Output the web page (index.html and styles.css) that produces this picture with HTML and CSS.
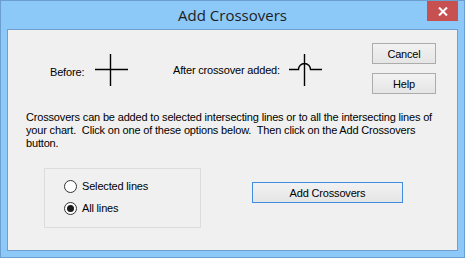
FILE: index.html
```html
<!DOCTYPE html>
<html lang="en">
<head>
  <meta charset="UTF-8" />
  <title>Add Crossovers</title>
  <link rel="stylesheet" href="styles.css">
</head>
<body>
  <div class="window">
    <div class="titlebar">
      <span></span>
      <span class="title">Add Crossovers</span>
      <button class="close" aria-label="Close">
        <svg width="10" height="9" viewBox="0 0 10 9">
          <path d="M1 0.5L9 8.5M9 0.5L1 8.5" stroke="#fff" stroke-width="2" />
        </svg>
      </button>
    </div>

    <div class="client">
      <div class="top">
        <div class="samples">
          <span class="before-label">Before:</span>
          <svg class="glyph" width="33" height="32" viewBox="0 0 33 32">
            <path d="M0 15.5H33M15.5 0V32" stroke="#000" stroke-width="1.4" fill="none" />
          </svg>
          <span class="after-label">After crossover added:</span>
          <svg class="glyph" width="33" height="32" viewBox="0 0 33 32">
            <path d="M0 15.5H9.5A6 6 0 0 1 21.5 15.5H33M15.5 0V32" stroke="#000" stroke-width="1.4" fill="none" />
          </svg>
        </div>
        <div class="side-buttons">
          <button class="btn">Cancel</button>
          <button class="btn">Help</button>
        </div>
      </div>

      <p class="info">Crossovers can be added to selected intersecting lines or to all the intersecting lines of
your chart.  Click on one of these options below.  Then click on the Add Crossovers
button.</p>

      <div class="bottom">
        <div class="group">
          <label class="option"><span class="radio"></span>Selected lines</label>
          <label class="option"><span class="radio checked"></span>All lines</label>
        </div>
        <button class="btn btn-default">Add Crossovers</button>
      </div>
    </div>
  </div>
</body>
</html>
```

FILE: styles.css
```css
body {
  margin: 0;
  font-family: "Liberation Sans", Arial, sans-serif;
  font-size: 11px;
  letter-spacing: -0.17px;
  color: #000;
}

.window {
  width: 465px;
  height: 258px;
  box-sizing: border-box;
  border: 1px solid #6b9fcf;
  background: #8cc8f8;
  padding: 0 6px 6px;
  display: flex;
  flex-direction: column;
}

.titlebar {
  height: 28px;
  margin: 0 -6px;
  display: grid;
  grid-template-columns: 1fr auto 1fr;
  align-items: start;
}

.title {
  font-family: "Open Sans", "Noto Sans", sans-serif;
  font-size: 15px;
  letter-spacing: 0;
  line-height: 29px;
  color: #1e1e1e;
}

.close {
  justify-self: end;
  width: 31px;
  height: 20px;
  margin-right: 6px;
  padding: 0;
  border: none;
  background: #c75050;
  display: flex;
  align-items: center;
  justify-content: center;
}

.client {
  flex: 1;
  background: #f0f0f0;
  border: 1px solid #6f9fcf;
}

.top {
  display: flex;
  align-items: flex-start;
  padding-top: 13px;
}

.samples {
  display: flex;
  align-items: center;
  height: 32px;
  margin-top: 11px;
  margin-left: 42px;
}

.before-label {
  width: 45px;
  padding-top: 3px;
}

.after-label {
  width: 116px;
  margin-left: 45px;
}

.glyph {
  display: block;
}

.side-buttons {
  margin-left: auto;
  margin-right: 21px;
  display: flex;
  flex-direction: column;
  gap: 9px;
}

.btn {
  height: 21px;
  padding: 0;
  border: 1px solid #acacac;
  background: linear-gradient(#f2f2f2, #e5e5e5);
  font-family: "Liberation Sans", Arial, sans-serif;
  font-size: 11px;
  letter-spacing: -0.17px;
  color: #000;
}

.side-buttons .btn {
  width: 64px;
}

.btn-default {
  width: 151px;
  margin-top: 14px;
  margin-left: 51px;
  border-color: #3d8ee2;
}

.info {
  margin: 17px 0 0 18px;
  line-height: 13px;
  white-space: pre;
}

.bottom {
  display: flex;
  align-items: flex-start;
  margin-top: 18px;
}

.group {
  width: 157px;
  height: 60px;
  box-sizing: border-box;
  margin-left: 36px;
  padding: 9px 0 0 19px;
  border: 1px solid #dcdcdc;
  display: flex;
  flex-direction: column;
  gap: 6px;
}

.option {
  display: flex;
  align-items: center;
  gap: 5px;
  height: 16px;
}

.radio {
  width: 13px;
  height: 13px;
  box-sizing: border-box;
  border: 1px solid #333;
  border-radius: 50%;
  background: #fff;
  display: flex;
  align-items: center;
  justify-content: center;
}

.radio.checked::after {
  content: "";
  width: 7px;
  height: 7px;
  border-radius: 50%;
  background: #1a1a1a;
}
```
